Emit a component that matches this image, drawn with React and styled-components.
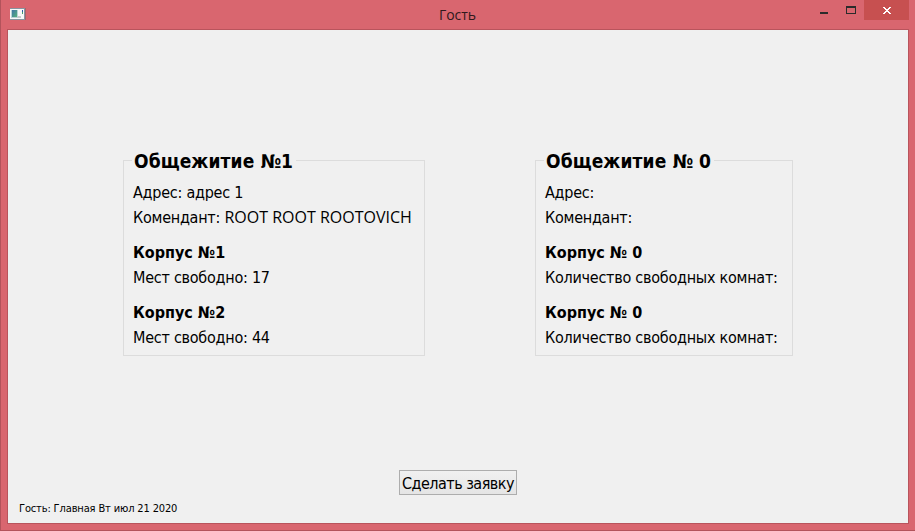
import React from "react";
import styled, { createGlobalStyle } from "styled-components";

const GlobalStyle = createGlobalStyle`
  * { box-sizing: border-box; }
  body { margin: 0; overflow: hidden; }
`;

const Window = styled.div`
  width: 915px;
  height: 531px;
  display: flex;
  flex-direction: column;
  padding: 0 6px 0 6px;
  background: #d9666f;
  border-left: 1px solid #b3535b;
  border-bottom: 1px solid #b3535b;
  font-family: "DejaVu Sans Condensed", "DejaVu Sans", sans-serif;
  color: #000;
`;

const TitleBar = styled.header`
  height: 29px;
  flex: none;
  display: grid;
  grid-template-columns: 138px 1fr 138px;
  align-items: start;
`;

const AppIcon = styled.svg`
  display: block;
  margin: 7px 0 0 3px;
`;

const Title = styled.h1`
  margin: 0;
  padding-right: 1px;
  text-align: center;
  font: 400 14px/29px "Open Sans", sans-serif;
  letter-spacing: -0.1px;
  color: #30191c;
`;

const Controls = styled.div`
  display: flex;
  justify-content: flex-end;
`;

const ControlButton = styled.button`
  width: ${(p) => (p.$close ? 45 : 27)}px;
  height: 20px;
  padding: 0;
  border: 0;
  background: ${(p) => (p.$close ? "#c75050" : "transparent")};

  svg { display: block; }
`;

const Client = styled.main`
  width: 902px;
  height: 495px;
  display: flex;
  flex-direction: column;
  background: #f0f0f0;
  border: 1px solid #b9545c;
`;

const Groups = styled.div`
  display: flex;
  align-items: flex-start;
  gap: 110px;
  margin: 119px 0 0 115px;
`;

const Group = styled.fieldset`
  width: ${(p) => p.$width}px;
  height: 207px;
  min-width: 0;
  margin: 0;
  padding: 8px 0 0 9px;
  border: 1px solid #dcdcdc;
`;

const Legend = styled.legend`
  height: 23px;
  margin-left: -1px;
  padding: 0 3px 0 2px;
  font-size: 19px;
  font-weight: 700;
  line-height: 25px;
  letter-spacing: 0.1px;
  white-space: nowrap;
`;

const Block = styled.section`
  margin-bottom: 10px;
`;

const Line = styled.p`
  margin: 0;
  height: 25px;
  font-size: 16px;
  line-height: 26px;
  letter-spacing: -0.25px;
  white-space: nowrap;
`;

const Subheading = styled(Line).attrs({ as: "h3" })`
  font-weight: 700;
  letter-spacing: 0;
`;

const LatinName = styled.span`
  font-family: "Open Sans", sans-serif;
  line-height: 1;
  letter-spacing: 0;
`;

const RequestButton = styled.button`
  align-self: center;
  width: 118px;
  height: 25px;
  margin-top: 114px;
  padding: 2px 0 0;
  border: 1px solid #adadad;
  background: linear-gradient(#f0f0f0, #e5e5e5);
  color: #000;
  font: 400 16px/21px "DejaVu Sans Condensed", sans-serif;
  letter-spacing: -0.52px;
  white-space: nowrap;
`;

const Status = styled.footer`
  margin: 7px 0 0 11px;
  font-size: 11px;
  line-height: 14px;
  letter-spacing: -0.14px;
`;

const dorms = [
  {
    title: "Общежитие №1",
    width: 302,
    address: "адрес 1",
    warden: "ROOT ROOT ROOTOVICH",
    buildings: [
      { name: "Корпус №1", info: "Мест свободно: 17" },
      { name: "Корпус №2", info: "Мест свободно: 44" },
    ],
  },
  {
    title: "Общежитие № 0",
    width: 258,
    address: "",
    warden: "",
    buildings: [
      { name: "Корпус № 0", info: "Количество свободных комнат:" },
      { name: "Корпус № 0", info: "Количество свободных комнат:" },
    ],
  },
];

function DormGroup({ dorm }) {
  return (
    <Group $width={dorm.width}>
      <Legend>{dorm.title}</Legend>
      <Block>
        <Line>Адрес: {dorm.address}</Line>
        <Line>
          Комендант: <LatinName>{dorm.warden}</LatinName>
        </Line>
      </Block>
      {dorm.buildings.map((b, i) => (
        <Block key={i}>
          <Subheading>{b.name}</Subheading>
          <Line>{b.info}</Line>
        </Block>
      ))}
    </Group>
  );
}

export default function App() {
  return (
    <Window>
      <GlobalStyle />
      <TitleBar>
        <AppIcon width="17" height="14" viewBox="0 0 17 14" shapeRendering="crispEdges">
          <defs>
            <linearGradient id="pane" x1="0" y1="0" x2="1" y2="1">
              <stop offset="0" stopColor="#3f74a8" />
              <stop offset="1" stopColor="#55b27c" />
            </linearGradient>
          </defs>
          <path d="M1 1h15v12H1z" fill="#a3656b" />
          <path d="M0 1h15v12H0z" fill="#8795a0" />
          <path d="M0 2h14v10H0z" fill="#f7f8f8" />
          <path d="M1 3h7v8H1z" fill="#b7d3d6" />
          <path d="M2 3h5v7H2z" fill="url(#pane)" />
          <path d="M8 9h3v2H8z" fill="#c7c9cb" />
          <path d="M12 3h1v2h-1z" fill="#2c5ca8" />
          <path d="M12 5h1v2h-1z" fill="#45a06b" />
        </AppIcon>
        <Title>Гость</Title>
        <Controls>
          <ControlButton aria-label="Свернуть">
            <svg width="27" height="20" shapeRendering="crispEdges">
              <path d="M10 12h8v2h-8z" fill="#2b2b2b" />
            </svg>
          </ControlButton>
          <ControlButton aria-label="Развернуть">
            <svg width="27" height="20" shapeRendering="crispEdges">
              <path d="M9 6h10v8H9zM10 8v5h8V8z" fill="#2b2b2b" fillRule="evenodd" />
            </svg>
          </ControlButton>
          <ControlButton $close aria-label="Закрыть">
            <svg width="45" height="20" shapeRendering="crispEdges">
              <path
                d="M19 7h2v1h1v1h2V8h1V7h2v1h-1v1h-1v1h-1v1h1v1h1v1h1v1h-2v-1h-1v-1h-2v1h-1v1h-2v-1h1v-1h1v-1h1v-1h-1V9h-1V8h-1z"
                fill="#fff"
              />
            </svg>
          </ControlButton>
        </Controls>
      </TitleBar>
      <Client>
        <Groups>
          {dorms.map((d) => (
            <DormGroup key={d.title} dorm={d} />
          ))}
        </Groups>
        <RequestButton>Сделать заявку</RequestButton>
        <Status>Гость: Главная Вт июл 21 2020</Status>
      </Client>
    </Window>
  );
}
